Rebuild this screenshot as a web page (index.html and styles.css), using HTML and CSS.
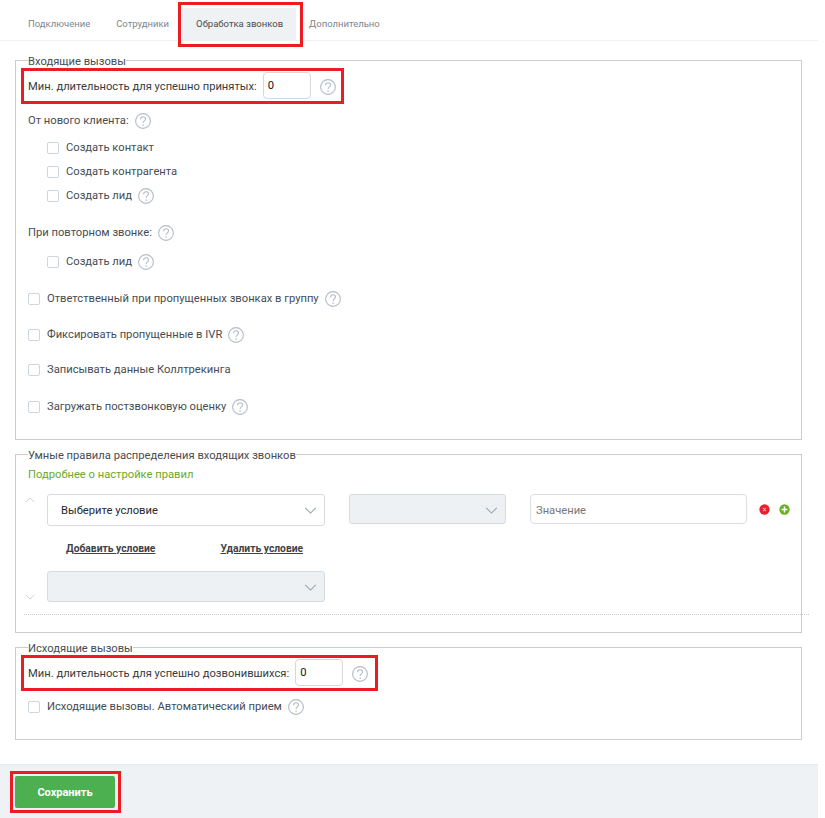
FILE: index.html
```html
<!DOCTYPE html>
<html lang="ru">
<head>
<meta charset="utf-8">
<title>Обработка звонков</title>
<link rel="stylesheet" href="styles.css">
</head>
<body>
<svg class="defs" width="0" height="0" aria-hidden="true">
  <symbol id="help" viewBox="0 0 16 16">
    <circle cx="8" cy="8" r="7.4" fill="none" stroke="#b4bcc6" stroke-width="1.1"/>
    <path d="M5.6 6.2c0-1.4 1.1-2.4 2.5-2.4s2.4 1 2.4 2.2c0 1.8-2.4 1.9-2.4 3.9" fill="none" stroke="#b4bcc6" stroke-width="1.1"/>
    <circle cx="8.1" cy="12.1" r=".8" fill="#b4bcc6"/>
  </symbol>
  <symbol id="chev" viewBox="0 0 14 8">
    <path d="M1 1l6 6 6-6" fill="none" stroke="#9aa3ad" stroke-width="1.2"/>
  </symbol>
</svg>

<nav class="tabs">
  <a class="tab">Подключение</a>
  <a class="tab">Сотрудники</a>
  <a class="tab tab-active">Обработка звонков</a>
  <a class="tab">Дополнительно</a>
</nav>

<main class="content">
  <fieldset class="group group-in">
    <legend>Входящие вызовы</legend>
    <div class="row row-min">
      <label>Мин. длительность для успешно принятых:</label>
      <input class="num" type="text" value="0">
      <svg class="help help-wide"><use href="#help"/></svg>
    </div>
    <div class="row row-head"><span>От нового клиента:</span><svg class="help"><use href="#help"/></svg></div>
    <div class="row row-sub row-sub-first"><span class="check"></span><span>Создать контакт</span></div>
    <div class="row row-sub"><span class="check"></span><span>Создать контрагента</span></div>
    <div class="row row-sub"><span class="check"></span><span>Создать лид</span><svg class="help"><use href="#help"/></svg></div>
    <div class="row row-head row-gap"><span>При повторном звонке:</span><svg class="help"><use href="#help"/></svg></div>
    <div class="row row-sub row-sub-repeat"><span class="check"></span><span>Создать лид</span><svg class="help"><use href="#help"/></svg></div>
    <div class="row row-top row-wide"><span class="check"></span><span>Ответственный при пропущенных звонках в группу</span><svg class="help"><use href="#help"/></svg></div>
    <div class="row row-top"><span class="check"></span><span>Фиксировать пропущенные в IVR</span><svg class="help"><use href="#help"/></svg></div>
    <div class="row row-top row-tight"><span class="check"></span><span>Записывать данные Коллтрекинга</span></div>
    <div class="row row-top row-wide"><span class="check"></span><span>Загружать постзвонковую оценку</span><svg class="help"><use href="#help"/></svg></div>
  </fieldset>

  <fieldset class="group group-rules">
    <legend>Умные правила распределения входящих звонков</legend>
    <a class="more">Подробнее о настройке правил</a>
    <div class="rules">
      <div class="arrows">
        <svg class="arrow arrow-up"><use href="#chev"/></svg>
        <svg class="arrow"><use href="#chev"/></svg>
      </div>
      <div class="rule-left">
        <div class="select select-main"><span>Выберите условие</span><svg class="chev"><use href="#chev"/></svg></div>
        <div class="links"><a>Добавить условие</a><a>Удалить условие</a></div>
        <div class="select select-off"><svg class="chev"><use href="#chev"/></svg></div>
      </div>
      <div class="select select-off select-op"><svg class="chev"><use href="#chev"/></svg></div>
      <input class="value" type="text" placeholder="Значение">
      <div class="actions">
        <svg class="act" viewBox="0 0 12 12"><circle cx="6" cy="6" r="5.6" fill="#e8202a"/><path d="M4.3 4.3l3.4 3.4M7.7 4.3l-3.4 3.4" stroke="#f6a5a8" stroke-width="1.2"/></svg>
        <svg class="act" viewBox="0 0 12 12"><circle cx="6" cy="6" r="5.6" fill="#6ab023"/><path d="M6 2.8v6.4M2.8 6h6.4" stroke="#fff" stroke-width="1.6"/></svg>
      </div>
    </div>
  </fieldset>

  <fieldset class="group group-out">
    <legend>Исходящие вызовы</legend>
    <div class="row row-min">
      <label>Мин. длительность для успешно дозвонившихся:</label>
      <input class="num" type="text" value="0">
      <svg class="help help-wide"><use href="#help"/></svg>
    </div>
    <div class="row row-auto"><span class="check"></span><span>Исходящие вызовы. Автоматический прием</span><svg class="help"><use href="#help"/></svg></div>
  </fieldset>
</main>

<footer class="footer"><button class="save" type="button">Сохранить</button></footer>

<div class="mark mark-tab"></div>
<div class="mark mark-in"></div>
<div class="mark mark-out"></div>
<div class="mark mark-save"></div>
</body>
</html>
```
FILE: styles.css
```css
* { box-sizing: border-box; }
html, body { margin: 0; padding: 0; }
html { background: #fff; }
body {
  position: relative;
  display: flex;
  flex-direction: column;
  width: 818px;
  height: 818px;
  background: #fff;
  color: #474c52;
  font-family: Roboto, "Liberation Sans", sans-serif;
  font-size: 11.2px;
  line-height: 14px;
}
.defs { position: absolute; }

.tabs {
  display: flex;
  height: 41px;
  padding: 8px 0 0 15px;
  border-bottom: 1px solid #eef0f2;
  flex: none;
}
.tab {
  height: 32px;
  padding: 9px 13px 0;
  font-size: 9.5px;
  color: #7d858d;
}
.tab-active {
  width: 114px;
  padding: 9px 0 0 14px;
  background: #eff2f5;
  color: #474c52;
}

.content { flex: 1; padding: 12px 16px 0 15px; }
.group {
  margin: 0;
  padding: 0 0 0 12px;
  border: 1px solid #ccc;
}
.group legend {
  margin: 0;
  padding: 2px 0 0;
  font-size: 11.2px;
  line-height: 13px;
  color: #474c52;
}
.group-in { height: 387px; }
.group-rules { height: 186px; margin-top: 7px; }
.group-out { height: 100px; margin-top: 7px; }

.row { display: flex; align-items: center; }
.row-min { height: 27px; margin-top: 4px; color: #363b40; }
.row-min label { padding-top: 3px; }
.num {
  width: 48px;
  height: 27px;
  margin-left: 6px;
  padding: 0 4px;
  border: 1px solid #d5d8db;
  border-radius: 4px;
  font: 11.2px Roboto, sans-serif;
  color: #111;
  background: #fff;
}
.help { width: 16px; height: 16px; margin-left: 6px; flex: none; }
.help-wide { margin: 3px 0 0 9px; }
.row-head { height: 16px; margin-top: 14px; }
.row-sub { height: 16px; margin-top: 8px; padding-left: 19px; }
.row-sub-first { margin-top: 11px; }
.row-sub-repeat { margin-top: 13px; }
.row-gap { margin-top: 21px; }
.row-top { height: 16px; margin-top: 20px; }
.row-wide { margin-top: 21px; }
.row-tight { margin-top: 19px; }
.row-auto { height: 16px; margin-top: 13px; }
.check {
  width: 12px;
  height: 12px;
  margin-right: 7px;
  border: 1px solid #cdd6de;
  border-radius: 2px;
  flex: none;
}

.more { display: block; margin-top: 6px; color: #6aa82e; }
.rules {
  position: relative;
  display: flex;
  align-items: flex-start;
  height: 121px;
  margin-top: 12px;
  margin-right: -8px;
  margin-left: -4px;
  border-bottom: 1px dotted #ccc;
}
.arrows {
  display: flex;
  flex-direction: column;
  justify-content: space-between;
  width: 23px;
  height: 106px;
  padding: 3px 0 0 1px;
  flex: none;
  opacity: .55;
}
.arrow { display: block; width: 10px; height: 6px; }
.arrow-up { transform: scaleY(-1); }
.rule-left { width: 278px; flex: none; }
.select {
  position: relative;
  display: flex;
  align-items: center;
  border: 1px solid #d5dbe1;
  border-radius: 3px;
  background: #fff;
}
.select-main { height: 32px; padding: 1px 0 0 13px; color: #26292d; }
.select-off { height: 31px; background: #eef1f4; }
.select-op { width: 157px; height: 30px; margin-left: 24px; flex: none; }
.chev { position: absolute; top: 12px; right: 7px; width: 13px; height: 7px; }
.links {
  display: flex;
  gap: 65px;
  height: 45px;
  padding: 16px 0 0 19px;
  font-size: 10.3px;
  font-weight: 700;
  color: #3f4348;
}
.links a { text-decoration: underline; }
.value {
  width: 217px;
  height: 30px;
  margin-left: 24px;
  padding: 3px 5px 0;
  border: 1px solid #dcdfe2;
  border-radius: 4px;
  font: 11.2px Roboto, sans-serif;
  flex: none;
}
.value::placeholder { color: #777; opacity: 1; }
.actions { display: flex; gap: 9px; margin: 10px 0 0 12px; }
.act { display: block; width: 11px; height: 11px; }

.footer {
  flex: none;
  height: 54px;
  padding: 11px 0 0 15px;
  background: #eff2f5;
  border-top: 1px solid #e6e8ea;
}
.save {
  display: block;
  width: 100px;
  height: 32px;
  border: 0;
  border-radius: 2px;
  background: #4caf50;
  color: #fff;
  font: 700 11px Roboto, sans-serif;
}

.mark { position: absolute; border: 3px solid #ed1c24; }
.mark-tab { left: 178px; top: 2px; width: 125px; height: 45px; }
.mark-in { left: 21px; top: 68px; width: 323px; height: 36px; }
.mark-out { left: 21px; top: 655px; width: 357px; height: 36px; }
.mark-save { left: 10px; top: 771px; width: 111px; height: 42px; }
```
